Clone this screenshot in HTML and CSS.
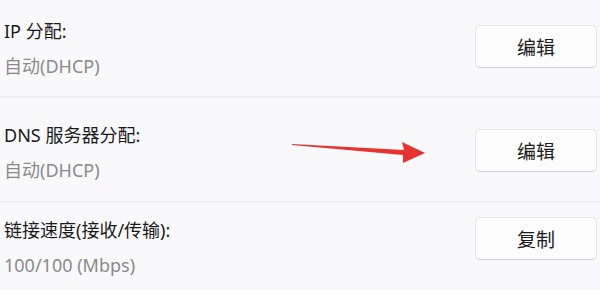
FILE: index.html
```html
<!DOCTYPE html>
<html>
  <head>
    <title>网络属性</title>
    <link rel="stylesheet" href="styles.css">
  </head>
  <body>
    <div class="list">
      <div class="row row-ip">
        <div class="info">
          <div class="label">IP 分配:</div>
          <div class="value">自动(DHCP)</div>
        </div>
        <button class="btn">编辑</button>
      </div>
      <div class="row row-dns">
        <div class="info">
          <div class="label">DNS 服务器分配:</div>
          <div class="value">自动(DHCP)</div>
        </div>
        <svg class="arrow" width="140" height="26" viewBox="0 0 140 26">
          <path d="M7 3 L119 9 L117 1 L140 12 L118 22 L118 14 L7 4 Z" fill="#e8322f" />
        </svg>
        <button class="btn">编辑</button>
      </div>
      <div class="row row-speed">
        <div class="info">
          <div class="label">链接速度(接收/传输):</div>
          <div class="value">100/100 (Mbps)</div>
        </div>
        <button class="btn">复制</button>
      </div>
    </div>
  </body>
</html>
```
FILE: styles.css
```css
* {
  margin: 0;
  padding: 0;
  box-sizing: border-box;
}

body {
  background-color: #f9f9fb;
  font-family: "Noto Sans", "Noto Sans CJK SC", sans-serif;
  color: #1a1a1a;
}

.list {
  display: flex;
  flex-direction: column;
}

.row {
  display: flex;
  align-items: flex-start;
  padding: 0 3px 0 4px;
  border-bottom: 2px solid #f0f0f3;
}
.row-ip {
  height: 98px;
}
.row-dns {
  height: 105px;
}
.row-speed {
  height: 87px;
  border-bottom: none;
}

.info {
  flex: 1;
}
.label {
  font-size: 18px;
  line-height: 20px;
}
.value {
  font-size: 18px;
  line-height: 20px;
  margin-top: 15px;
  color: #8a8a8a;
}
.row-ip .info {
  padding-top: 21px;
}
.row-dns .info {
  padding-top: 27px;
}
.row-speed .info {
  padding-top: 17px;
}

.btn {
  width: 122px;
  height: 43px;
  background-color: #fdfdfd;
  border: 1px solid #e6e6e8;
  border-bottom-color: #d2d2d6;
  border-radius: 5px;
  font-family: "Noto Sans CJK SC", sans-serif;
  font-size: 19px;
  color: #1b1b1b;
}
.row-ip .btn {
  margin-top: 25px;
}
.row-dns .btn {
  margin-top: 31px;
}
.row-speed .btn {
  margin-top: 14px;
}

.arrow {
  margin: 43px 50px 0 0;
}
```
